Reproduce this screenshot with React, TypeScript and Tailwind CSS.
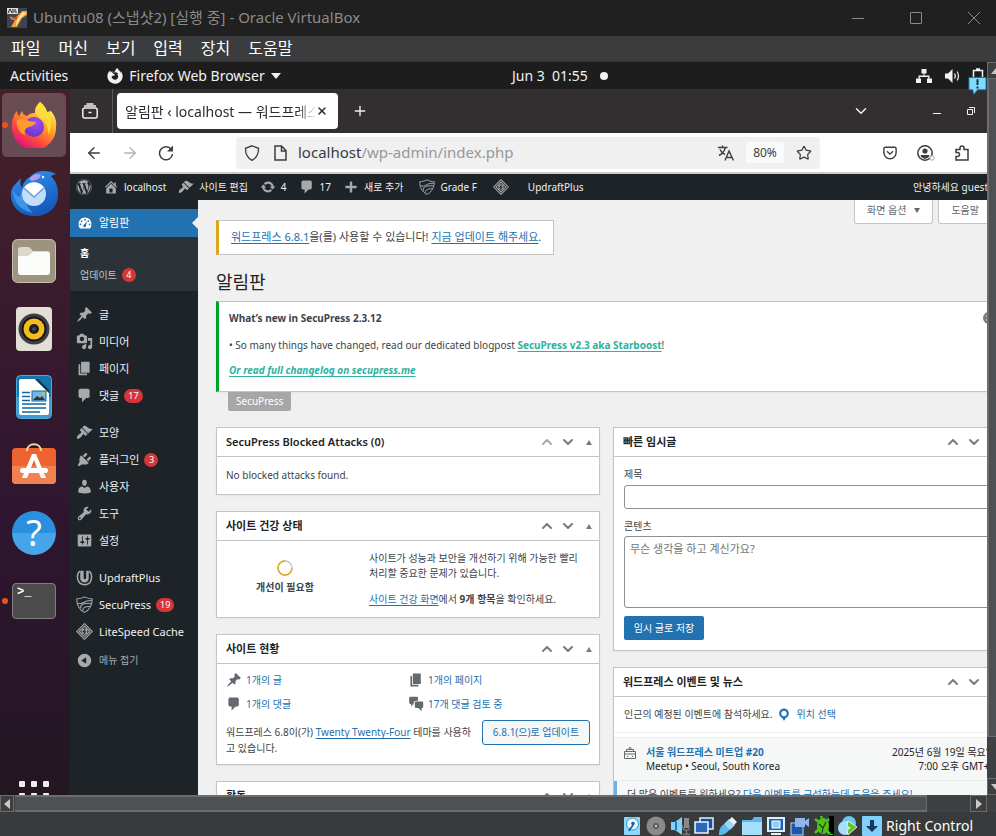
import type { ReactNode } from "react";
import { FaFirefoxBrowser, FaWordpress } from "react-icons/fa";
import { ArrowLeft, ArrowRight, ChevronDown, ChevronUp, Plus, Star, X } from "lucide-react";

/* ---------- Admin icon set (20 x 20 grid) ---------- */

const GLYPHS = {
  home: "M16 8.5l1.53 1.53-1.06 1.06L10 4.6l-6.47 6.49-1.06-1.06L10 2.5l4 4v-2h2v4zm-6-2.46l6 5.99V18H4v-5.97zM12 17v-5H8v5h4z",
  post: "M10.44 3.02l1.82-1.82 6.36 6.35-1.83 1.82c-1.05-.68-2.48-.57-3.41.36l-.75.75c-.92.93-1.04 2.35-.35 3.41l-1.83 1.82-2.41-2.41-2.8 2.79c-.42.42-3.38 2.71-3.8 2.29s1.86-3.39 2.28-3.81l2.79-2.79L4.1 9.36l1.83-1.82c1.05.69 2.48.57 3.4-.36l.75-.75c.93-.92 1.05-2.35.36-3.41z",
  page: "M6 15V2h10v13H6zm-1 1h8v2H3V5h2v11z",
  comment: "M5 2h9c1.1 0 2 .9 2 2v7c0 1.1-.9 2-2 2h-2l-5 5v-5H5c-1.1 0-2-.9-2-2V4c0-1.1.9-2 2-2z",
  comments: "M3 1h8c.8 0 1.500.7 1.500 1.500V6H10c-1.700 0-3 1.300-3 3v1l-3 3v-3H3c-.8 0-1.500-.7-1.500-1.500v-6C1.500 1.700 2.200 1 3 1zm7 6h7.500c.8 0 1.500.7 1.500 1.500v5c0 .8-.7 1.500-1.500 1.500H17v4l-4-4h-3c-.8 0-1.500-.7-1.500-1.500v-5C8.500 7.700 9.200 7 10 7z",
  media: "M13 11V4c0-.55-.45-1-1-1h-1.67L9 1H5L3.67 3H2c-.55 0-1 .45-1 1v7c0 .55.45 1 1 1h10c.55 0 1-.45 1-1zM7 4.5c1.38 0 2.5 1.12 2.5 2.5S8.38 9.5 7 9.5 4.500 8.38 4.500 7 5.620 4.500 7 4.500zM14 6h5v10.500c0 1.380-1.120 2.500-2.500 2.500S14 17.880 14 16.500s1.120-2.500 2.500-2.500c.17 0 .34.02.5.05V9h-3V6zm-4 8.050V13h2v3.500c0 1.380-1.120 2.500-2.500 2.500S7 17.880 7 16.500 8.120 14 9.500 14c.17 0 .34.02.5.05z",
  appearance: "M14.48 11.06L7.41 3.99l1.5-1.5c.5-.56 2.3-.47 3.51.32 1.21.8 1.43 1.28 2.91 2.1 1.18.64 2.45 1.26 4.45.85zm-.71.71L6.7 4.7 4.93 6.47c-.39.39-.39 1.02 0 1.41l1.06 1.06c.39.39.39 1.03 0 1.42-.6.6-1.43 1.11-2.21 1.69-.35.26-.7.53-1.01.84C1.43 14.23.4 16.08 1.4 17.07c.99 1 2.84-.03 4.18-1.36.31-.31.58-.66.85-1.02.57-.78 1.08-1.61 1.69-2.21.39-.39 1.02-.39 1.41 0l1.06 1.06c.39.39 1.02.39 1.41 0z",
  plugins: "M13.11 4.36L9.87 7.6 8 5.73l3.24-3.24c.35-.34 1.05-.2 1.56.32.52.51.66 1.21.31 1.55zm-8 1.77l.91-1.12 9.01 9.01-1.19.84c-.71.71-2.63 1.16-3.82 1.16H6.14L4.9 17.26c-.59.59-1.54.59-2.12 0-.59-.58-.59-1.53 0-2.12l1.24-1.24v-3.88c0-1.13.4-3.19 1.09-3.89zm7.26 3.97l3.24-3.24c.34-.35 1.04-.21 1.55.31.52.51.66 1.21.31 1.55l-3.24 3.25z",
  users: "M10 9.25c-2.27 0-2.73-3.44-2.73-3.44C7 4.02 7.82 2 9.97 2c2.16 0 2.98 2.02 2.71 3.81 0 0-.41 3.44-2.68 3.44zm0 2.57L12.72 10c2.39 0 4.52 2.33 4.52 4.53v2.49s-3.65 1.13-7.24 1.13c-3.65 0-7.24-1.13-7.24-1.13v-2.49c0-2.25 1.94-4.48 4.47-4.48z",
  tools: "M16.68 9.77c-1.34 1.34-3.3 1.67-4.95.99l-5.41 6.52c-.99.99-2.59.99-3.58 0s-.99-2.59 0-3.57l6.52-5.42c-.68-1.65-.35-3.61.99-4.95 1.28-1.28 3.12-1.62 4.72-1.06l-2.89 2.89 2.82 2.82 2.86-2.87c.53 1.58.18 3.39-1.08 4.65zM3.81 16.21c.4.39 1.04.39 1.43 0 .4-.4.4-1.04 0-1.43-.39-.4-1.03-.4-1.43 0-.39.39-.39 1.03 0 1.43z",
  settings: "M18 16V4c0-.55-.45-1-1-1H3c-.55 0-1 .45-1 1v12c0 .55.45 1 1 1h14c.55 0 1-.45 1-1zM8 11h1c.55 0 1 .45 1 1s-.45 1-1 1H8v1.5c0 .28-.22.5-.5.5s-.5-.22-.5-.5V13H6c-.55 0-1-.45-1-1s.45-1 1-1h1V5.5c0-.28.22-.5.5-.5s.5.22.5.5V11zm5-2h-1c-.55 0-1-.45-1-1s.45-1 1-1h1V5.5c0-.28.22-.5.5-.5s.5.22.5.5V7h1c.55 0 1 .45 1 1s-.45 1-1 1h-1v5.5c0 .28-.22.5-.5.5s-.5-.22-.5-.5V9z",
  update: "M10.2 3.28c3.53 0 6.43 2.61 6.92 6h2.08l-3.5 4-3.5-4h2.32c-.45-1.97-2.21-3.45-4.32-3.45-1.45 0-2.73.71-3.54 1.78L4.95 5.66C6.23 4.2 8.11 3.28 10.2 3.28zm-.4 13.44c-3.52 0-6.43-2.61-6.92-6H.8l3.5-4c1.17 1.33 2.33 2.67 3.5 4H5.48c.45 1.97 2.21 3.45 4.32 3.45 1.45 0 2.73-.71 3.54-1.78l1.71 1.95c-1.28 1.46-3.15 2.38-5.25 2.38z",
  plus: "M17 8.5v3h-5.500V17h-3v-5.500H3v-3h5.500V3h3v5.500z",
  location: "M10 2C6.69 2 4 4.69 4 8c0 2.02 1.17 3.71 2.53 4.89.43.37 1.18.96 1.85 1.83.74.97 1.41 2.01 1.62 2.71.21-.7.88-1.74 1.62-2.71.67-.87 1.42-1.46 1.85-1.83C14.83 11.71 16 10.02 16 8c0-3.31-2.69-6-6-6zm0 2.56c1.9 0 3.44 1.54 3.44 3.44S11.9 11.44 10 11.44 6.56 9.9 6.56 8 8.1 4.56 10 4.56z",
  collapse: "M10 2.16c4.33 0 7.84 3.51 7.84 7.84s-3.51 7.84-7.84 7.84S2.16 14.33 2.16 10 5.71 2.16 10 2.16zm2 11.72V6.12L6.18 9.97z",
};

type Glyph = keyof typeof GLYPHS | "dashboard" | "updraft" | "secupress" | "litespeed";

function Icon({ name, className = "size-4" }: { name: Glyph; className?: string }) {
  const box = `${className} shrink-0 fill-current`;
  if (name === "dashboard")
    return (
      <svg viewBox="0 0 20 20" className={box} aria-hidden="true">
        <path d="M3.76 17h12.480c1.340-1.630 1.760-3.700 1.760-6 0-4.420-3.580-8-8-8s-8 3.580-8 8c0 2.300.42 4.370 1.760 6z" />
        <g fill="#2271b1">
          <circle cx="10" cy="5.800" r="1.100" />
          <circle cx="5.800" cy="7.600" r="1.100" />
          <circle cx="14.200" cy="7.600" r="1.100" />
          <circle cx="4.300" cy="11.600" r="1.100" />
          <circle cx="15.700" cy="11.600" r="1.100" />
          <path d="M12.800 7.300l-1.500 5.400a1.800 1.800 0 11-1.800-1.100z" />
        </g>
      </svg>
    );
  if (name === "updraft")
    return (
      <svg viewBox="0 0 20 20" className={box} aria-hidden="true">
        <path d="M4.500 2.500C0 6 .5 18 10 18.500S20 6 15.500 2.500" fill="none" stroke="currentColor" strokeWidth="1.800" />
        <path d="M5 2h4v8.500a1.500 1.500 0 003 0V2h3v9a5 5 0 01-10 0z" />
      </svg>
    );
  if (name === "secupress")
    return (
      <svg viewBox="0 0 20 20" className={`${className} shrink-0`} fill="none" stroke="currentColor" strokeWidth="1.200" aria-hidden="true">
        <path d="M.8 3.500C4 3.400 7 2.500 10 1c3 1.500 6 2.400 9.200 2.500C19 10 16.500 16 10 19.300 3.500 16 1 10 .8 3.500z" />
        <path d="M2 8c5 3.500 7-3.500 16.500-2.500M5.500 14.500C5 9 9 8.500 18 8.500M8 17c0-4 3-4.500 8.500-5" />
      </svg>
    );
  if (name === "litespeed")
    return (
      <svg viewBox="0 0 20 20" className={`${className} shrink-0`} fill="none" stroke="currentColor" strokeWidth="1.300" aria-hidden="true">
        <path d="M10 .8l9.200 9.200-9.200 9.200L.8 10z" />
        <path d="M10 3.800l6.200 6.200-6.200 6.200L3.800 10z" />
        <circle cx="10" cy="10" r="3.400" fill="currentColor" stroke="none" />
        <path d="M10.800 7.600L8.600 10.300h2.600L9.200 12.600" stroke="#1d2327" />
      </svg>
    );
  return (
    <svg viewBox="0 0 20 20" className={box} aria-hidden="true">
      <path fillRule="evenodd" d={GLYPHS[name]} />
    </svg>
  );
}

/* ---------- Host window ---------- */

function TitleBar() {
  return (
    <header className="flex h-9 shrink-0 items-center bg-[#202020] text-[#8a8a8a]">
      <svg viewBox="0 0 20 20" className="ml-[7px] size-5" aria-hidden="true">
        <rect width="20" height="20" fill="#3b4450" />
        <rect width="11" height="6" fill="#ddd" />
        <path d="M1 5l2-4 2 4M6 1v4M8 1v3h2" stroke="#222" strokeWidth="1" fill="none" />
        <path d="M3 8c2 2 5 2 7 0l5-5h5v4l-5 3-5 9H4l4-7c-3 0-5-1-5-4z" fill="#f5a034" />
        <path d="M4 8c2 2 4 2 6 0l1 3c-2 1-6 1-7-3z" fill="#d9480f" />
        <path d="M10 11l6-7 3 1-6 6-4 7z" fill="#ffe7a8" />
      </svg>
      <h1 className="ml-1.5 pb-[3px] text-[15px] leading-6">Ubuntu08 (스냅샷2) [실행 중] - Oracle VirtualBox</h1>
      <div className="ml-auto flex gap-3.5">
        <button aria-label="최소화" className="grid h-8 w-11 place-items-center">
          <span className="h-px w-3 bg-current" />
        </button>
        <button aria-label="최대화" className="grid h-8 w-11 place-items-center">
          <span className="size-3 rounded-[1px] border border-current" />
        </button>
        <button aria-label="닫기" className="grid h-8 w-11 place-items-center">
          <svg viewBox="0 0 12 12" className="size-3" stroke="currentColor" aria-hidden="true">
            <path d="M0 0l12 12M12 0L0 12" />
          </svg>
        </button>
      </div>
    </header>
  );
}

function MenuBar() {
  return (
    <nav className="flex h-[26px] shrink-0 items-center gap-[18px] border-b-2 border-[#363839] bg-[#3b3c3e] px-[11px] text-[16px] text-white">
      {["파일", "머신", "보기", "입력", "장치", "도움말"].map((m) => (
        <button key={m} className="leading-6">{m}</button>
      ))}
    </nav>
  );
}

function ArrowButton({ label, d, className }: { label: string; d: string; className: string }) {
  return (
    <button aria-label={label} className={`grid shrink-0 place-items-center border border-[#6a6c6e] bg-[#3e3f41] ${className}`}>
      <svg viewBox="0 0 10 10" className="size-2.5 shrink-0 fill-[#c8c8c8]" aria-hidden="true">
        <path d={d} />
      </svg>
    </button>
  );
}

function VerticalScroll() {
  return (
    <div className="w-[9px] shrink-0 overflow-hidden bg-[#3f4041]">
      <div className="flex h-full w-[17px] flex-col">
        <ArrowButton label="위로" d="M5 2l5 6H0z" className="h-[17px] w-full" />
        <div className="w-full flex-[16] border-b border-l-2 border-[#6a6c6e] bg-[#4f5052]" />
        <div className="w-full flex-1" />
        <ArrowButton label="아래로" d="M5 8l5-6H0z" className="h-[17px] w-full" />
      </div>
    </div>
  );
}

function HorizontalScroll() {
  return (
    <div className="flex h-[17px] shrink-0 bg-[#3f4041] pr-[9px]">
      <ArrowButton label="왼쪽으로" d="M8 0v10L2 5z" className="h-full w-3.5" />
      <div className="ml-px flex-[21] border-y-2 border-r border-[#6a6c6e] bg-[#4f5052]" />
      <div className="flex-1" />
      <ArrowButton label="오른쪽으로" d="M2 0v10l6-5z" className="h-full w-[17px]" />
    </div>
  );
}

const STATUS_ICONS: { label: string; art: ReactNode }[] = [
  { label: "하드 디스크", art: <><rect x="2" y="1" width="16" height="18" rx="1" fill="#8fd8fb" /><circle cx="10.500" cy="8" r="6" fill="#e8f8ff" stroke="#2d8fd0" strokeWidth="1" /><path d="M11 8c0 4-3 3-4 7" fill="none" stroke="#1d5fa5" strokeWidth="1.800" /><circle cx="11" cy="7.500" r="1.800" fill="#1d5fa5" /></> },
  { label: "광학 드라이브", art: <><circle cx="10" cy="10" r="9.500" fill="#8a8a8a" /><circle cx="10" cy="10" r="3" fill="#5a5a5a" /><circle cx="10" cy="10" r="1.200" fill="#ccc" /></> },
  { label: "오디오", art: <><path d="M1 6h4l7-5v18l-7-5H1z" fill="#7fd4f8" /><path d="M5 6h2v8H5z" fill="#2a76b8" /><path d="M14 2h5v10h-5z" fill="#8a8a8a" /><path d="M12.500 9c0 7 8 7 8 0M16.500 14v4M13 18.500h7" fill="none" stroke="#777" strokeWidth="1.500" /></> },
  { label: "네트워크", art: <><rect x="6" y="2" width="13" height="11" fill="#1a4fa0" stroke="#d9f1ff" strokeWidth="1.500" /><rect x="1" y="6" width="13" height="11" fill="#2a68bb" stroke="#e6f6ff" strokeWidth="1.500" /></> },
  { label: "USB", art: <><path d="M1 19c0-5 1-8 5-11l6 5c-3 4-6 6-11 6z" fill="#5db8f0" /><path d="M6 8l5-5 6 6-5 5z" fill="#9ad8fb" /><path d="M11 4l3-3 5 5-3 3z" fill="#f2f2f2" /></> },
  { label: "공유 폴더", art: <><path d="M0 4h10l2-3h8v18H0z" fill="#58b9f4" /><path d="M0 6h20v13H0z" fill="#a4dffd" /></> },
  { label: "디스플레이", art: <><rect x="1" y="1" width="18" height="15" fill="#d9f1ff" /><rect x="3" y="3" width="14" height="11" fill="#1d5fb0" /><rect x="6" y="5" width="8" height="7" fill="#8fd0f8" stroke="#fff" /><path d="M5 18h10" stroke="#d9f1ff" strokeWidth="2" /></> },
  { label: "녹화", art: <><rect x="1" y="7" width="12" height="12" fill="#1d55a8" stroke="#b5daf5" /><path d="M5 2h10v9H5zM15 5l4-3v9l-4-3z" fill="#8fb4f2" /></> },
  { label: "CPU", art: <><rect x="15" width="5" height="20" fill="#000" /><ellipse cx="9" cy="10" rx="6" ry="8" fill="#4fc21c" /><path d="M1 3l5 4M1 17l4-4M15 3l-4 4M16 18l-4-4M8 2l-1-2" stroke="#4fc21c" strokeWidth="2.500" /><path d="M5 8l4 4 3-6M9 12l-1 5" stroke="#17470a" strokeWidth="1.200" fill="none" /><path d="M16 18.500h3" stroke="#0f0" /></> },
  { label: "마우스", art: <><circle cx="11" cy="7" r="7" fill="#6cc7f5" /><circle cx="7" cy="12" r="7" fill="#a4dffd" /><path d="M10 5l9 6-9 8-1-5 3-2-3-2z" fill="#62c42c" stroke="#fff" strokeWidth=".8" /></> },
  { label: "키보드", art: <><rect width="20" height="20" rx="1" fill="#7fd0fb" /><path d="M8 4h4v6h4l-6 6-6-6h4z" fill="#15385f" /></> },
];

function StatusBar() {
  return (
    <footer className="flex h-6 shrink-0 items-center justify-end gap-1 bg-[#393a3b] pr-[23px] text-white">
      {STATUS_ICONS.map((s) => (
        <svg key={s.label} viewBox="0 0 20 20" className="mt-1 size-5" role="img" aria-label={s.label}>
          {s.art}
        </svg>
      ))}
      <span className="mt-1 text-[14px] leading-5">Right Control</span>
    </footer>
  );
}

/* ---------- Ubuntu desktop ---------- */

function TopPanel() {
  return (
    <div className="flex h-[27px] shrink-0 items-center bg-[#1d1d1d] pl-2.5 text-[14px] text-[#f2f2f2]">
      <button>Activities</button>
      <button className="ml-[39px] flex items-center gap-1.5">
        <FaFirefoxBrowser className="size-4" />
        Firefox Web Browser
        <svg viewBox="0 0 10 6" className="h-1.5 w-2.5 fill-current" aria-hidden="true">
          <path d="M0 0h10L5 6z" />
        </svg>
      </button>
      <div className="flex-[3]" />
      <time className="flex items-center gap-3">
        <span className="whitespace-pre">Jun 3  01:55</span>
        <span className="size-2 rounded-full bg-current" />
      </time>
      <div className="flex-[4]" />
      <div className="flex items-center gap-3 pr-10">
        <svg viewBox="0 0 16 14" className="h-3.5 w-4 fill-current" aria-hidden="true">
          <path d="M5.500 0h5v4.500h-2v2h5v3H16V14h-5V9.500h1.200V8H3.800v1.500H5V14H0V9.500h2.500v-3h5v-2h-2z" />
        </svg>
        <svg viewBox="0 0 16 14" className="h-3.5 w-4" aria-hidden="true">
          <path d="M1 4.500h3L8.500 0v14L4 9.500H1z" fill="currentColor" />
          <path d="M10.500 4.500c1 1.500 1 3.500 0 5M13 2.500c2 2.500 2 6.500 0 9" stroke="currentColor" strokeWidth="1.200" fill="none" />
        </svg>
        <svg viewBox="0 0 12 16" className="h-4 w-3" fill="none" stroke="currentColor" strokeWidth="1.500" aria-hidden="true">
          <path d="M1.500 2.500h9v12h-9zM4 1h4" />
        </svg>
      </div>
    </div>
  );
}

function AlertBubble() {
  return (
    <svg viewBox="0 0 20 20" className="absolute top-[14px] right-0 h-5 w-[19px]" role="img" aria-label="알림">
      <path d="M1 1h18v13h-9l-4 5-1-5H1z" fill="#7fdcfb" stroke="#1471a8" />
      <path d="M10 3v6M10 10.500v2" stroke="#0b2a3c" strokeWidth="2" />
    </svg>
  );
}

const DOCK: { name: string; running?: boolean; active?: boolean; art: ReactNode }[] = [
  {
    name: "Firefox",
    running: true,
    active: true,
    art: (
      <svg viewBox="0 0 46 46" className="size-[46px]" aria-hidden="true">
        <defs>
          <linearGradient id="fx" x1="0.8" y1="0.1" x2="0.25" y2="0.95">
            <stop offset="0" stopColor="#fff14f" />
            <stop offset=".35" stopColor="#ffa62b" />
            <stop offset=".7" stopColor="#ff4a3d" />
            <stop offset="1" stopColor="#e0107c" />
          </linearGradient>
          <radialGradient id="fxg" cx=".6" cy=".3" r=".8">
            <stop offset="0" stopColor="#a24bf5" />
            <stop offset="1" stopColor="#5b34c4" />
          </radialGradient>
        </defs>
        <path d="M29 0c5 4 6 7 7 10l4-1c4 5 6 10 5 16a22 22 0 01-44 2C0 19 3 12 6 9c0 3 1 4 2 5l3-5c1 3 2 4 5 5 3-3 6-3 8-3 0-5 2-8 5-11z" fill="url(#fx)" />
        <circle cx="23" cy="25" r="10" fill="url(#fxg)" />
        <path d="M29 0c5 4 6 7 7 10 5 7 6 15 1 23 1-9-3-14-8-17-4-3-5-6-5-9 1-3 3-5 5-7z" fill="#ffe23a" opacity=".75" />
        <path d="M6 18c5-2 9-1 12 1l7 1c-1 3-4 4-7 5-4 1-5 4-4 8-6-2-9-9-8-15z" fill="#ff9a2c" />
      </svg>
    ),
  },
  {
    name: "Thunderbird",
    art: (
      <svg viewBox="0 0 48 48" className="size-12" aria-hidden="true">
        <defs>
          <linearGradient id="tb" x1=".2" y1="0" x2=".6" y2="1">
            <stop offset="0" stopColor="#2f8fec" />
            <stop offset="1" stopColor="#1556b8" />
          </linearGradient>
        </defs>
        <path d="M20 8c5-7 18-8 26-3l-5 2c5 5 7 11 7 18 0 14-10 22-23 22C9 47 0 37 1 23c1-6 6-9 10-14-1 4-1 7 1 10 1-5 4-9 8-11z" fill="url(#tb)" />
        <path d="M3 22c1 13 9 20 20 22-8-7-10-17-5-28-4 2-7 6-8 12-3-1-5-3-7-6z" fill="#4fa8f2" opacity=".7" />
        <path d="M19 10c4-5 9-6 12-4-1 4-5 5-9 6z" fill="#b59cf0" />
        <circle cx="24" cy="25" r="12" fill="#c2defa" />
        <path d="M14 19l10 9 10-9a12 12 0 00-20 0z" fill="#fff" />
        <path d="M14 19l10 9 10-9" stroke="#6f9fd0" strokeWidth="1.500" fill="none" />
        <circle cx="33" cy="8" r="1.200" fill="#fff" />
      </svg>
    ),
  },
  {
    name: "Files",
    art: (
      <svg viewBox="0 0 44 44" className="size-11" aria-hidden="true">
        <rect x=".5" y=".5" width="43" height="43" rx="5" fill="#9d9480" stroke="#c7c0af" />
        <path d="M6 11a3 3 0 013-3h8l4 4h14a3 3 0 013 3v4H6z" fill="#ddd8cc" />
        <path d="M6 17h10l5-4h14a3 3 0 013 3v17a3 3 0 01-3 3H9a3 3 0 01-3-3z" fill="#fcfcfb" />
      </svg>
    ),
  },
  {
    name: "Rhythmbox",
    art: (
      <svg viewBox="0 0 36 44" className="h-11 w-9" aria-hidden="true">
        <rect width="36" height="44" rx="4" fill="#e4dfd6" />
        <circle cx="18" cy="22" r="15.500" fill="#3f4046" />
        <circle cx="18" cy="22" r="12.500" fill="#15171c" />
        <circle cx="18" cy="22" r="10.500" fill="#f2bd1d" />
        <circle cx="18" cy="22" r="5" fill="#1d1f22" />
        <circle cx="18" cy="22" r="2" fill="#44484a" />
      </svg>
    ),
  },
  {
    name: "LibreOffice Writer",
    art: (
      <svg viewBox="0 0 36 44" className="h-11 w-9" aria-hidden="true">
        <rect x=".5" y=".5" width="35" height="43" rx="4" fill="#1673ab" stroke="#4fa9d8" />
        <path d="M1 22h34v18a3 3 0 01-3 3H4a3 3 0 01-3-3z" fill="#3f9bd0" />
        <path d="M3 6a2 2 0 012-2h14l14 14v20a2 2 0 01-2 2H5a2 2 0 01-2-2z" fill="#fff" />
        <path d="M19 4l14 14v-3L22 4z" fill="#0c3550" />
        <path d="M6 17.500h8M6 21.500h8M6 25.500h8M6 29h24M6 33h24M6 37h18" stroke="#11679c" strokeWidth="1.600" />
        <rect x="16" y="16" width="14" height="10" fill="#74b8e4" stroke="#11679c" />
        <path d="M17 25l4-4 3 2 2-2 3 4z" fill="#333" />
        <path d="M26 17h3v3z" fill="#f5c211" />
      </svg>
    ),
  },
  {
    name: "Ubuntu Software",
    art: (
      <svg viewBox="0 0 44 44" className="size-11" aria-hidden="true">
        <rect y="5" width="44" height="36" rx="4" fill="#ef6330" />
        <path d="M0 23h44v14a4 4 0 01-4 4H4a4 4 0 01-4-4z" fill="#f18250" />
        <path d="M15 8c0-9 14-9 14 0" fill="none" stroke="#f7d9a8" strokeWidth="2" />
        <path d="M20 11h4l10 24h-5l-7-18-7 18h-5z" fill="#fff" />
        <rect x="8" y="25" width="28" height="5" rx="2.500" fill="#fff" />
      </svg>
    ),
  },
  {
    name: "Help",
    art: (
      <span className="grid size-11 place-items-center rounded-full bg-linear-to-b from-[#2b8fe0] from-50% to-[#46a5ea] to-50% text-[36px] leading-11 text-white">
        ?
      </span>
    ),
  },
  {
    name: "Terminal",
    running: true,
    art: (
      <span className="h-9 w-11 rounded-[4px] border border-[#808080] bg-[#4b4b4b] pl-1 text-left font-['Liberation_Mono',monospace] text-[12px] leading-4 font-bold text-white">
        &gt;_
      </span>
    ),
  },
];

function Dock() {
  return (
    <aside className="flex w-[70px] shrink-0 flex-col bg-linear-to-b from-[#452029] via-[#2f1530] via-60% to-[#221721] pt-0.5 pr-0.5">
      {DOCK.map((app) => (
        <button key={app.name} aria-label={app.name} className="flex h-[68px] w-full items-center">
          <span className={`ml-0.5 flex h-16 w-16 items-center rounded-[5px] ${app.active ? "bg-white/20" : ""}`}>
            <span className={`size-1.5 shrink-0 rounded-full ${app.running ? "bg-[#e95420]" : ""}`} />
            <span className="grid w-[52px] place-items-center">{app.art}</span>
          </span>
        </button>
      ))}
      <button aria-label="Show Applications" className="mt-auto ml-[19px] grid w-[30px] grid-cols-3 gap-1.5">
        {Array.from({ length: 9 }, (_, i) => (
          <span key={i} className="size-1.5 rounded-[1px] bg-[#eee]" />
        ))}
      </button>
    </aside>
  );
}

/* ---------- Browser ---------- */

function TabStrip() {
  return (
    <div className="flex h-11 shrink-0 items-center bg-[#332f30] pl-0.5 text-[#f0f0f0]">
      <button aria-label="Firefox View" className="grid h-9 w-9 place-items-center">
        <svg viewBox="0 0 16 16" className="size-4" fill="none" stroke="currentColor" strokeWidth="1.500" aria-hidden="true">
          <rect x=".8" y="5" width="14.400" height="10" rx="2" />
          <path d="M2 3h12M4.500 1h7M6.500 9.500h3" />
        </svg>
      </button>
      <span className="ml-1 h-full w-px bg-[#5c595a]" />
      <div className="ml-1 flex h-9 w-[221px] items-center rounded-[4px] bg-white pr-2.5 pl-2 text-[#2b2a33]">
        <span className="flex-1 overflow-hidden mask-r-from-90% text-[14px] whitespace-nowrap">알림판 ‹ localhost — 워드프레스</span>
        <button aria-label="Close tab">
          <X className="size-3" strokeWidth={3} />
        </button>
      </div>
      <button aria-label="New tab" className="ml-3 grid size-5 place-items-center">
        <Plus className="size-4" />
      </button>
      <button aria-label="List all tabs" className="ml-auto">
        <ChevronDown className="size-[18px]" />
      </button>
      <div className="ml-[50px] flex items-center pr-0.5">
        <button aria-label="Minimize" className="grid h-9 w-[34px] place-items-center pt-1">
          <span className="h-px w-2 bg-current" />
        </button>
        <button aria-label="Restore" className="grid h-9 w-[34px] place-items-center">
          <svg viewBox="0 0 8 8" className="size-2" fill="none" stroke="currentColor" aria-hidden="true">
            <path d="M.5 2.500h5v5h-5zM2 .5h5.500V6" />
          </svg>
        </button>
        <button aria-label="Close window" className="grid h-9 w-[34px] place-items-center">
          <X className="size-3" />
        </button>
      </div>
    </div>
  );
}

function NavBar() {
  const slot = "grid size-9 place-items-center";
  return (
    <div className="flex h-[41px] shrink-0 items-center border-b-2 border-[#c9cccb] bg-white pr-2 pl-1.5 text-[#3d3d42]">
      <button aria-label="Back" className={slot}><ArrowLeft className="size-[18px]" strokeWidth={1.800} /></button>
      <button aria-label="Forward" className={`${slot} text-[#b5b5b8]`}><ArrowRight className="size-[18px]" strokeWidth={1.800} /></button>
      <button aria-label="Reload" className={slot}>
        <svg viewBox="0 0 16 16" className="size-4" aria-hidden="true">
          <path d="M13.300 4.500A6.500 6.500 0 1014.500 9" fill="none" stroke="currentColor" strokeWidth="1.500" />
          <path d="M15 .5v6H9z" fill="currentColor" />
        </svg>
      </button>
      <div className="mx-[52px] flex h-8 flex-1 items-center rounded-[4px] bg-[#f0f0f1] pr-2 pl-2">
        <svg viewBox="0 0 16 16" className="size-4" fill="none" stroke="currentColor" strokeWidth="1.300" aria-hidden="true">
          <path d="M8 .8l6.500 2.500c.2 5.700-2 9.700-6.500 12C3.500 13 1.300 9 1.500 3.300z" />
        </svg>
        <svg viewBox="0 0 16 16" className="ml-3 size-4" fill="none" stroke="currentColor" strokeWidth="1.500" aria-hidden="true">
          <path d="M3 1h6.500L14 5.500V15H3zM9.500 1v5H14" />
        </svg>
        <span className="ml-2.5 flex-1 text-[15px] text-[#97979c]"><span className="text-[#3a3a42]">localhost</span>/wp-admin/index.php</span>
        <svg viewBox="0 0 16 16" className="size-4" fill="none" stroke="currentColor" strokeWidth="1.400" aria-hidden="true">
          <path d="M0 2.500h9.500M4.500.5v2M1 10.500C4 9 6.500 6 7.500 2.500M2 4.500c1 2.500 3 4 5 5M7 15.500L11 6l4.500 9.500M8.500 12.500h5.500" />
        </svg>
        <button aria-label="Zoom level" className="mx-3 h-[21px] w-[38px] rounded-[3px] bg-[#fafafa] text-[12px]">80%</button>
        <button aria-label="Bookmark"><Star className="size-4" strokeWidth={1.800} /></button>
      </div>
      <button aria-label="Pocket" className={slot}>
        <svg viewBox="0 0 16 16" className="size-3.5" fill="none" stroke="currentColor" strokeWidth="1.600" aria-hidden="true">
          <path d="M2.500 1.500h11a1.500 1.500 0 011.500 1.500v4.500a7 7 0 01-14 0V3a1.500 1.500 0 011.500-1.500zM4.500 6L8 9.300 11.500 6" />
        </svg>
      </button>
      <button aria-label="Account" className={slot}>
        <svg viewBox="0 0 18 16" className="h-4 w-[18px]" aria-hidden="true">
          <circle cx="8" cy="8" r="7.200" fill="none" stroke="currentColor" strokeWidth="1.500" />
          <circle cx="8" cy="6" r="2.600" fill="currentColor" />
          <path d="M3.500 10h9c-.5 2.500-2.500 3.800-4.500 3.800S4 12.500 3.500 10z" fill="currentColor" />
          <circle cx="15" cy="13" r="2.200" fill="#fff" stroke="#aaa" />
        </svg>
      </button>
      <button aria-label="Extensions" className={slot}>
        <svg viewBox="0 0 16 16" className="size-4" fill="none" stroke="currentColor" strokeWidth="1.500" aria-hidden="true">
          <path d="M2 15h12V4.500h-4V3a2 2 0 00-4 0v1.500H2V7.500h1.500a2 2 0 010 4H2z" />
        </svg>
      </button>
      <button aria-label="Menu" className={slot}>
        <svg viewBox="0 0 16 16" className="size-4" stroke="currentColor" strokeWidth="1.500" aria-hidden="true">
          <path d="M1 3h14M1 8h14M1 13h14" />
        </svg>
      </button>
    </div>
  );
}

/* ---------- WordPress admin ---------- */

function BarItem({ icon, children, className = "" }: { icon?: Glyph; children?: ReactNode; className?: string }) {
  return (
    <a href="#" className={`flex items-center gap-[5px] ${className}`}>
      {icon && <Icon name={icon} className="size-4 text-[#a7aaad]" />}
      {children}
    </a>
  );
}

function AdminBar() {
  return (
    <nav className="flex h-[26px] shrink-0 items-center bg-[#1d2327] pr-3 pl-1.5 text-[10px] leading-4 whitespace-nowrap text-[#f0f0f1]">
      <a href="#" aria-label="워드프레스 정보"><FaWordpress className="size-4 text-[#a7aaad]" /></a>
      <BarItem icon="home" className="ml-[11px]">localhost</BarItem>
      <BarItem icon="appearance" className="ml-3">사이트 편집</BarItem>
      <BarItem icon="update" className="ml-3">4</BarItem>
      <BarItem icon="comment" className="ml-3">17</BarItem>
      <BarItem icon="plus" className="ml-3">새로 추가</BarItem>
      <BarItem icon="secupress" className="ml-4">Grade F</BarItem>
      <BarItem icon="litespeed" className="ml-4" />
      <BarItem className="ml-[19px]">UpdraftPlus</BarItem>
      <a href="#" className="ml-auto flex items-center gap-1.5">
        안녕하세요 guest
        <span className="size-[18px] bg-[#c3c4c7]" />
      </a>
    </nav>
  );
}

function Badge({ children }: { children: ReactNode }) {
  return (
    <span className="ml-[5px] inline-grid h-3.5 min-w-3.5 place-items-center rounded-full bg-[#d63638] px-1 text-[9px] leading-3 text-white">
      {children}
    </span>
  );
}

const MENU: { icon: Glyph; label: string; count?: number }[][] = [
  [
    { icon: "post", label: "글" },
    { icon: "media", label: "미디어" },
    { icon: "page", label: "페이지" },
    { icon: "comment", label: "댓글", count: 17 },
  ],
  [
    { icon: "appearance", label: "모양" },
    { icon: "plugins", label: "플러그인", count: 3 },
    { icon: "users", label: "사용자" },
    { icon: "tools", label: "도구" },
    { icon: "settings", label: "설정" },
  ],
  [
    { icon: "updraft", label: "UpdraftPlus" },
    { icon: "secupress", label: "SecuPress", count: 19 },
    { icon: "litespeed", label: "LiteSpeed Cache" },
  ],
];

function Sidebar() {
  return (
    <nav className="w-32 shrink-0 bg-[#1d2327] pt-[9px] text-[11px] leading-4 text-[#f0f0f1]">
      <a href="#" className="relative flex h-7 items-center gap-1.5 bg-[#2271b1] pl-[7px] text-white">
        <Icon name="dashboard" />
        알림판
        <svg viewBox="0 0 6 12" className="absolute right-0 h-3 w-1.5 fill-[#f0f0f1]" aria-hidden="true">
          <path d="M6 0v12L0 6z" />
        </svg>
      </a>
      <div className="flex h-[54px] flex-col justify-center gap-1.5 bg-[#2c3338] pl-2.5 text-[10px]">
        <a href="#" className="font-bold text-white">홈</a>
        <a href="#" className="flex items-center text-[#c3c4c7]">업데이트<Badge>4</Badge></a>
      </div>
      {MENU.map((group) => (
        <ul key={group[0].label} className="pt-2.5">
          {group.map((item) => (
            <li key={item.label}>
              <a href="#" className="flex h-[27px] items-center pl-1.5">
                <Icon name={item.icon} className="size-[17px] text-[#a7aaad]" />
                <span className="ml-1.5 whitespace-nowrap">{item.label}</span>
                {item.count && <Badge>{item.count}</Badge>}
              </a>
            </li>
          ))}
        </ul>
      ))}
      <button className="flex h-[30px] items-center pl-1.5 text-[10px] text-[#a7aaad]">
        <Icon name="collapse" className="size-[17px]" />
        <span className="ml-1.5">메뉴 접기</span>
      </button>
    </nav>
  );
}

const LINK = "text-[#2271b1] underline underline-offset-2";

function PostBox({ title, dimUp, children }: { title: string; dimUp?: boolean; children?: ReactNode }) {
  return (
    <section className="border border-[#c3c4c7] bg-white shadow-xs">
      <header className="flex h-[29px] items-center border-b border-[#c3c4c7] pl-[9px] text-[#787c82]">
        <h3 className="mr-auto pb-0.5 text-[11px] font-semibold text-[#1d2327]">{title}</h3>
        <button aria-label="위로 이동" className={`grid w-[21px] place-items-center ${dimUp ? "text-[#a7aaad]" : ""}`}>
          <ChevronUp className="size-4" strokeWidth={3} />
        </button>
        <button aria-label="아래로 이동" className="grid w-[21px] place-items-center">
          <ChevronDown className="size-4" strokeWidth={3} />
        </button>
        <button aria-label="패널 토글" className="grid w-[21px] place-items-center">
          <svg viewBox="0 0 6 5" className="h-[5px] w-1.5 fill-current" aria-hidden="true">
            <path d="M3 0l3 5H0z" />
          </svg>
        </button>
      </header>
      {children}
    </section>
  );
}

function ScreenTabs() {
  return (
    <div className="flex h-6 justify-end gap-[5px]">
      {["화면 옵션", "도움말"].map((t) => (
        <button key={t} className="flex items-center gap-2 rounded-b-[3px] border border-t-0 border-[#c3c4c7] bg-white px-3 pb-0.5 text-[10px] text-[#646970]">
          {t}
          <svg viewBox="0 0 6 5" className="h-[5px] w-1.5 fill-current" aria-hidden="true">
            <path d="M0 0h6L3 5z" />
          </svg>
        </button>
      ))}
    </div>
  );
}

function Glance() {
  const rows: { icon: Glyph; text: string }[] = [
    { icon: "post", text: "1개의 글" },
    { icon: "page", text: "1개의 페이지" },
    { icon: "comment", text: "1개의 댓글" },
    { icon: "comments", text: "17개 댓글 검토 중" },
  ];
  return (
    <div className="px-[9px] pt-1 pb-2">
      <ul className="grid grid-cols-2">
        {rows.map((r) => (
          <li key={r.text}>
            <a href="#" className="flex h-6 items-center gap-1 text-[#2271b1]">
              <Icon name={r.icon} className="size-4 text-[#646970]" />
              {r.text}
            </a>
          </li>
        ))}
      </ul>
      <div className="flex items-start pt-1">
        <p className="flex-1 pt-1 leading-4">
          워드프레스 6.8이(가) <a href="#" className={LINK}>Twenty Twenty-Four</a> 테마를 사용하고 있습니다.
        </p>
        <button className="ml-1 h-[25px] w-[108px] shrink-0 rounded-[3px] border border-[#2271b1] bg-[#f6f7f7] text-[#2271b1]">
          6.8.1(으)로 업데이트
        </button>
      </div>
    </div>
  );
}

function Dashboard() {
  return (
    <main className="min-w-0 flex-1 bg-[#f0f0f1] px-[18px] text-[10px] leading-[15px] text-[#3c434a]">
      <ScreenTabs />
      <div className="-mt-1 w-fit border border-l-[3px] border-[#c3c4c7] border-l-[#dba617] bg-white px-3 pt-2 pb-2.5 text-[11px]">
        <a href="#" className={LINK}>워드프레스 6.8.1</a>을(를) 사용할 수 있습니다! <a href="#" className={LINK}>지금 업데이트 해주세요</a>.
      </div>
      <h2 className="pt-[15px] pb-[7px] text-[18px] leading-6 text-[#1d2327]">알림판</h2>
      <div className="flex h-[91px] justify-between border border-l-[3px] border-[#c3c4c7] border-l-[#00a32a] bg-white pr-2 pl-2.5 shadow-xs">
        <div className="flex flex-col gap-2.5 pt-[9px] text-[10px]">
          <p className="font-bold">What’s new in SecuPress 2.3.12</p>
          <p className="pt-0.5">• So many things have changed, read our dedicated blogpost <a href="#" className="font-bold text-[#2bb3a0] underline underline-offset-2">SecuPress v2.3 aka Starboost</a>!</p>
          <a href="#" className="font-bold text-[#2bb3a0] italic underline underline-offset-2">Or read full changelog on secupress.me</a>
        </div>
        <button aria-label="이 알림 무시하기" className="mt-2.5 mr-0.5 grid size-3 place-items-center rounded-full bg-[#787c82] text-white">
          <X className="size-2" strokeWidth={4} />
        </button>
      </div>
      <span className="ml-3 block w-fit rounded-b-[2px] bg-[#a7a7a7] px-2 py-0.5 text-white">SecuPress</span>

      <div className="grid grid-cols-[minmax(0,384fr)_minmax(0,393fr)] items-start gap-[13px] pt-4">
        <div className="flex flex-col gap-4">
          <PostBox title="SecuPress Blocked Attacks (0)" dimUp>
            <p className="px-[9px] py-[11px]">No blocked attacks found.</p>
          </PostBox>
          <PostBox title="사이트 건강 상태">
            <div className="flex px-[9px] py-2.5">
              <div className="flex w-[118px] flex-col items-center justify-center gap-1 pb-1">
                <svg viewBox="0 0 16 16" className="size-4" fill="none" strokeWidth="1.300" aria-hidden="true">
                  <circle cx="8" cy="8" r="7" stroke="#c3c4c7" />
                  <circle cx="8" cy="8" r="7" stroke="#dba617" strokeDasharray="33 11" />
                </svg>
                <strong>개선이 필요함</strong>
              </div>
              <div className="ml-[25px] flex-1 break-keep">
                <p>사이트가 성능과 보안을 개선하기 위해 가능한 빨리 처리할 중요한 문제가 있습니다.</p>
                <p className="pt-[11px]"><a href="#" className={LINK}>사이트 건강 화면</a>에서 <strong>9개 항목</strong>을 확인하세요.</p>
              </div>
            </div>
          </PostBox>
          <PostBox title="사이트 현황">
            <Glance />
          </PostBox>
          <PostBox title="활동" />
        </div>

        <div className="flex flex-col gap-4">
          <PostBox title="빠른 임시글">
            <form className="px-2.5 pt-[9px] pb-2.5">
              <label htmlFor="draft-title" className="block leading-4">제목</label>
              <input id="draft-title" className="mt-[3px] block h-6 w-full rounded-[3px] border border-[#8c8f94] bg-white px-1.5" />
              <label htmlFor="draft-body" className="mt-[9px] block leading-4">콘텐츠</label>
              <textarea
                id="draft-body"
                placeholder="무슨 생각을 하고 계신가요?"
                className="mt-0.5 block h-[72px] w-full resize-none rounded-[3px] border border-[#8c8f94] bg-white px-[5px] py-1 text-[11px] placeholder:text-[#757575]"
              />
              <button type="button" className="mt-2 h-6 w-20 rounded-[2px] bg-[#2271b1] text-white">임시 글로 저장</button>
            </form>
          </PostBox>
          <PostBox title="워드프레스 이벤트 및 뉴스">
            <div className="flex h-9 items-center border-b border-[#f0f0f1] px-2.5">
              인근의 예정된 이벤트에 참석하세요.
              <button className="ml-1 flex items-center gap-1 text-[#2271b1]">
                <Icon name="location" className="size-4" />
                위치 선택
              </button>
            </div>
            <ul className="mt-1">
              <li className="flex h-11 items-center border-y border-[#eaebec] bg-[#f6f7f7] px-2.5 leading-3.5 text-[#1d2327]">
                <svg viewBox="0 0 12 12" className="mr-2.5 mb-3 size-3" fill="none" stroke="#646970" aria-hidden="true">
                  <path d="M.5 4.500h11v7H.5zM2.500 4.500v-2h7v2M.5 7h11" />
                  <circle cx="6" cy="1.500" r="1" />
                  <path d="M3.500 9v1M8.500 9v1" />
                </svg>
                <div>
                  <a href="#" className="font-bold text-[#2271b1]">서울 워드프레스 미트업 #20</a>
                  <p>Meetup • Seoul, South Korea</p>
                </div>
                <p className="ml-auto text-right">2025년 6월 19일 목요일<br />7:00 오후 GMT+9</p>
              </li>
              <li className="border-l-[3px] border-[#72aee6] bg-[#f6f7f7] px-2.5 py-1.5">
                더 많은 이벤트를 원하세요? <a href="#" className="text-[#2271b1]">다음 이벤트를 구성하는데 도움을 주세요!</a>
              </li>
            </ul>
          </PostBox>
        </div>
      </div>
    </main>
  );
}

export default function App() {
  return (
    <div className="flex h-screen flex-col overflow-hidden font-['Noto_Sans','Noto_Sans_CJK_KR',sans-serif]">
      <TitleBar />
      <MenuBar />
      <div className="flex min-h-0 flex-1">
        <div className="relative min-w-0 flex-1 overflow-hidden">
          <div className="flex h-full min-h-[749px] w-full min-w-[1024px] flex-col">
            <TopPanel />
            <div className="flex min-h-0 flex-1">
              <Dock />
              <div className="flex min-w-0 flex-1 flex-col overflow-hidden">
                <TabStrip />
                <NavBar />
                <AdminBar />
                <div className="flex min-h-0 flex-1">
                  <Sidebar />
                  <Dashboard />
                </div>
              </div>
            </div>
          </div>
          <AlertBubble />
        </div>
        <VerticalScroll />
      </div>
      <HorizontalScroll />
      <StatusBar />
    </div>
  );
}
